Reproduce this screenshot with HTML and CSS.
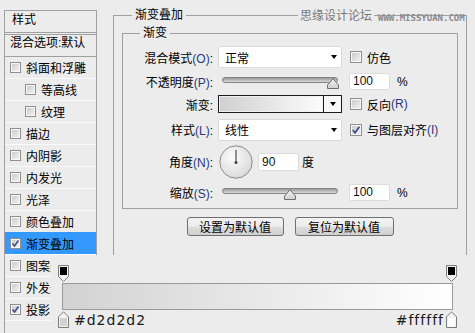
FILE: index.html
```html
<!DOCTYPE html>
<html>
<head>
  <meta charset="utf-8">
  <title>图层样式 - 渐变叠加</title>
  <link rel="stylesheet" href="styles.css">
</head>
<body>
<div class="dialog">

  <div class="styles-list">
    <div class="list-title">样式</div>
    <div class="list-blend">混合选项:默认</div>
    <div class="list-item"><span class="cb"></span>斜面和浮雕</div>
    <div class="list-item sub"><span class="cb"></span>等高线</div>
    <div class="list-item sub"><span class="cb"></span>纹理</div>
    <div class="list-item"><span class="cb"></span>描边</div>
    <div class="list-item"><span class="cb"></span>内阴影</div>
    <div class="list-item"><span class="cb"></span>内发光</div>
    <div class="list-item"><span class="cb"></span>光泽</div>
    <div class="list-item"><span class="cb"></span>颜色叠加</div>
    <div class="list-item selected"><span class="cb"><svg width="9" height="9" viewBox="0 0 9 9"><path d="M1.5 4.5 L3.5 7 L7.5 1.5" fill="none" stroke="#3b4f8c" stroke-width="1.6"/></svg></span>渐变叠加</div>
    <div class="list-item"><span class="cb"></span>图案叠加</div>
    <div class="list-item"><span class="cb"></span>外发光</div>
    <div class="list-item"><span class="cb"><svg width="9" height="9" viewBox="0 0 9 9"><path d="M1.5 4.5 L3.5 7 L7.5 1.5" fill="none" stroke="#3b4f8c" stroke-width="1.6"/></svg></span>投影</div>
    <div class="list-item"></div>
  </div>

  <div class="panel">
    <fieldset class="group">
      <legend>渐变叠加</legend>

      <fieldset class="group inner">
        <legend>渐变</legend>

        <div class="row r1">
          <span class="lbl">混合模式<span class="key">(O)</span>:</span>
          <div class="select">正常<span class="arrow"></span></div>
          <div class="check"><span class="cb big"></span>仿色</div>
        </div>

        <div class="row r2">
          <span class="lbl">不透明度<span class="key">(P)</span>:</span>
          <div class="slider">
            <div class="track"></div>
            <svg class="thumb" style="left: 109px" width="12" height="11" viewBox="0 0 12 11"><defs><linearGradient id="tg1" x1="0" y1="0" x2="0" y2="1"><stop offset="0" stop-color="#f4f4f4"/><stop offset="1" stop-color="#cfcfcf"/></linearGradient></defs><path d="M0.5 10.5 V7 L6 0.8 L11.5 7 V10.5 Z" fill="url(#tg1)" stroke="#6f6f6f"/></svg>
          </div>
          <div class="field">100</div>
          <span class="unit">%</span>
        </div>

        <div class="row r3">
          <span class="lbl">渐变:</span>
          <div class="swatch">
            <div class="swatch-fill"></div>
            <div class="swatch-btn"><span class="arrow big"></span></div>
          </div>
          <div class="check"><span class="cb big"></span>反向<span class="key">(R)</span></div>
        </div>

        <div class="row r4">
          <span class="lbl">样式<span class="key">(L)</span>:</span>
          <div class="select">线性<span class="arrow"></span></div>
          <div class="check"><span class="cb big"><svg width="10" height="10" viewBox="0 0 10 10"><path d="M1.8 5 L4 7.8 L8.4 1.8" fill="none" stroke="#3b4f8c" stroke-width="1.7"/></svg></span>与图层对齐<span class="key">(I)</span></div>
        </div>

        <div class="row r5">
          <span class="lbl">角度<span class="key">(N)</span>:</span>
          <svg class="dial" width="34" height="34" viewBox="0 0 34 34">
            <defs>
              <radialGradient id="dg" cx="0.4" cy="0.35" r="0.7">
                <stop offset="0" stop-color="#fbfbfb"/>
                <stop offset="1" stop-color="#d9d9d9"/>
              </radialGradient>
            </defs>
            <circle cx="17" cy="17" r="16.2" fill="url(#dg)" stroke="#8a8a8a"/>
            <line x1="17" y1="17.5" x2="17" y2="5" stroke="#5a5a5a" stroke-width="1.3"/>
            <circle cx="17" cy="17.5" r="1.6" fill="#4a4a4a"/>
          </svg>
          <div class="field angle">90</div>
          <span class="unit deg">度</span>
        </div>

        <div class="row r6">
          <span class="lbl">缩放<span class="key">(S)</span>:</span>
          <div class="slider">
            <div class="track"></div>
            <svg class="thumb" style="left: 66px" width="12" height="11" viewBox="0 0 12 11"><defs><linearGradient id="tg2" x1="0" y1="0" x2="0" y2="1"><stop offset="0" stop-color="#f4f4f4"/><stop offset="1" stop-color="#cfcfcf"/></linearGradient></defs><path d="M0.5 10.5 V7 L6 0.8 L11.5 7 V10.5 Z" fill="url(#tg2)" stroke="#6f6f6f"/></svg>
          </div>
          <div class="field">100</div>
          <span class="unit">%</span>
        </div>
      </fieldset>

      <div class="buttons">
        <button type="button">设置为默认值</button>
        <button type="button" class="wide">复位为默认值</button>
      </div>
    </fieldset>
  </div>
</div>

<div class="watermark">
  <span class="wm-cn">思缘设计论坛</span>
  <span class="wm-url">WWW.MISSYUAN.COM</span>
</div>

<div class="grad-editor">
  <div class="stops">
    <svg width="11" height="18" viewBox="0 0 11 18"><path d="M0.5 0.5 H10.5 V11.5 L5.5 16.5 L0.5 11.5 Z" fill="#f2f2f2" stroke="#7c7c7c"/><rect x="2" y="2" width="7" height="8" fill="#000"/></svg>
    <svg width="11" height="18" viewBox="0 0 11 18"><path d="M0.5 0.5 H10.5 V11.5 L5.5 16.5 L0.5 11.5 Z" fill="#f2f2f2" stroke="#7c7c7c"/><rect x="2" y="2" width="7" height="8" fill="#000"/></svg>
  </div>
  <div class="bar"></div>
  <div class="stops bottom">
    <svg width="11" height="18" viewBox="0 0 11 18"><path d="M5.5 0.8 L10.5 5.8 V16.5 H0.5 V5.8 Z" fill="#f2f2f2" stroke="#7c7c7c"/><rect x="2" y="7" width="7" height="8" fill="#d2d2d2"/></svg>
    <span class="hex">#d2d2d2</span>
    <span class="hex right">#ffffff</span>
    <svg width="11" height="18" viewBox="0 0 11 18"><path d="M5.5 0.8 L10.5 5.8 V16.5 H0.5 V5.8 Z" fill="#f2f2f2" stroke="#7c7c7c"/><rect x="2" y="7" width="7" height="8" fill="#ffffff"/></svg>
  </div>
</div>
</body>
</html>
```

FILE: styles.css
```css
html, body {
  margin: 0;
  padding: 0;
  width: 475px;
  height: 333px;
  overflow: hidden;
  background: #ececec;
  color: #000;
  font: 12px "Liberation Sans", "Noto Sans CJK SC", sans-serif;
}

.dialog { display: flex; align-items: flex-start; }

/* left list of styles */
.styles-list {
  width: 91px;
  height: 330px;
  margin: 10px 0 0 4px;
  border: 1px solid #a0a0a0;
  border-bottom: none;
  flex: none;
}
.list-title {
  height: 21px;
  line-height: 18px;
  padding-left: 7px;
  border-bottom: 3px double #a0a0a0;
}
.list-blend {
  height: 21px;
  line-height: 16px;
  padding-left: 5px;
  border-bottom: 1px solid #a0a0a0;
}
.list-item {
  height: 21px;
  padding-left: 5px;
  border-bottom: 1px solid #fafafa;
  display: flex;
  align-items: center;
  white-space: nowrap;
}
.list-item.sub { padding-left: 20px; }
.list-item.selected { background: #3399ff; box-shadow: 0 -1px 0 #3399ff; }

.cb {
  width: 11px;
  height: 11px;
  box-sizing: border-box;
  border: 1px solid #8f8f8f;
  background: linear-gradient(135deg, #c8c8c8, #f4f4f4);
  box-shadow: inset 0 0 0 1px #f8f8f8;
  margin-right: 5px;
  flex: none;
  display: flex;
  align-items: center;
  justify-content: center;
}
.cb svg { display: block; }
.cb.big { width: 12px; height: 12px; }

/* right panel */
.panel { margin-left: 16px; }

.group {
  margin: 7px 0 0 0;
  width: 354px;
  box-sizing: border-box;
  padding: 2px 8px 40px 8px;
  border: 1px solid #a0a0a0;
}
.group legend {
  margin-left: 10px;
  padding: 0 3px;
  line-height: 16px;
}
.group.inner {
  margin: 0;
  width: 336px;
  padding: 5px 0 8px 0;
}
.group.inner legend { margin-left: 17px; }

.row { display: flex; align-items: center; margin-top: 5px; }
.row.r1 { margin-top: 0; height: 22px; }
.row.r2 { height: 17px; }
.row.r3 { height: 18px; }
.row.r4 { height: 23px; }
.row.r5 { height: 33px; margin-top: 4px; }
.row.r6 { height: 15px; margin-top: 7px; }

.lbl {
  width: 90px;
  margin-right: 5px;
  text-align: right;
  flex: none;
  white-space: nowrap;
}
.key { color: #2a3878; }

.select {
  width: 124px;
  height: 22px;
  box-sizing: border-box;
  background: #fff;
  border: 1px solid #dadada;
  border-radius: 2px;
  padding: 0 4px 0 6px;
  display: flex;
  align-items: center;
  justify-content: space-between;
  flex: none;
}
.arrow {
  width: 0;
  height: 0;
  border-top: 4px solid #000;
  border-left: 3px solid transparent;
  border-right: 3px solid transparent;
}
.arrow.big { border-left-width: 3.5px; border-right-width: 3.5px; }

.check {
  margin-left: 8px;
  display: flex;
  align-items: center;
  white-space: nowrap;
}

.slider {
  position: relative;
  width: 124px;
  height: 16px;
  flex: none;
}
.track {
  margin: 3px 4px 0 4px;
  height: 6px;
  box-sizing: border-box;
  border: 1px solid #858585;
  border-radius: 3px;
  background: linear-gradient(#999, #dadada);
}
.thumb { position: absolute; top: 4px; display: block; }

.field {
  width: 41px;
  height: 17px;
  box-sizing: border-box;
  margin-left: 7px;
  padding-left: 3px;
  line-height: 15px;
  background: #fff;
  border: 1px solid #dcdcdc;
  border-radius: 2px;
  color: #111;
  flex: none;
}
.field.angle { margin-left: 5px; height: 18px; line-height: 16px; }
.unit { margin-left: 7px; }
.unit.deg { margin-left: 3px; }

.swatch {
  width: 124px;
  height: 18px;
  box-sizing: border-box;
  border: 1px solid #1c1c1c;
  display: flex;
  flex: none;
}
.swatch-fill {
  flex: 1;
  background: linear-gradient(to right, #d0d0d0, #fdfdfd);
  box-shadow: inset 0 0 0 1px #f0f0f0;
}
.swatch-btn {
  width: 17px;
  border-left: 1px solid #1c1c1c;
  background: #f8f8f8;
  display: flex;
  align-items: center;
  justify-content: center;
}

.dial { display: block; margin-left: 1px; flex: none; }

.buttons {
  display: flex;
  justify-content: center;
  gap: 11px;
  margin-top: 8px;
}
.buttons button {
  width: 97px;
  height: 19px;
  padding: 0;
  font: 12px "Liberation Sans", "Noto Sans CJK SC", sans-serif;
  color: #000;
  border: 1px solid #707070;
  border-radius: 3px;
  background: linear-gradient(#f3f3f3 0, #ebebeb 50%, #dddddd 51%, #cfcfcf 100%);
}
.buttons button.wide { width: 99px; }

/* watermark on top border */
.watermark {
  position: absolute;
  top: 9px;
  left: 298px;
  display: flex;
  align-items: flex-start;
}
.wm-cn {
  background: #ececec;
  color: #7a7a7a;
  padding: 0 2px;
  line-height: 14px;
}
.wm-url {
  margin: 5px 0 0 4px;
  font: bold 9px/9px "DejaVu Sans Mono", monospace;
  color: #8a8a8a;
}

/* gradient editor strip lying over the dialog */
.grad-editor {
  position: absolute;
  left: 51px;
  top: 255px;
  right: 0;
  bottom: 0;
  background: #ececec;
  padding: 10px 22px 0 11px;
}
.stops {
  display: flex;
  justify-content: space-between;
  margin: 0 -4px;
  height: 18px;
}
.stops svg { display: block; }
.stops.bottom {
  margin-top: 1px;
  align-items: center;
  justify-content: flex-start;
}
.bar {
  height: 27px;
  box-sizing: border-box;
  border: 1px solid #9a9a9a;
  background: linear-gradient(to right, #d2d2d2, #fff);
}
.hex {
  margin-left: 5px;
  font: 14px "DejaVu Sans", sans-serif;
  letter-spacing: 1px;
  color: #1a1a1a;
}
.hex.right { margin-left: auto; margin-right: 2px; }
```
